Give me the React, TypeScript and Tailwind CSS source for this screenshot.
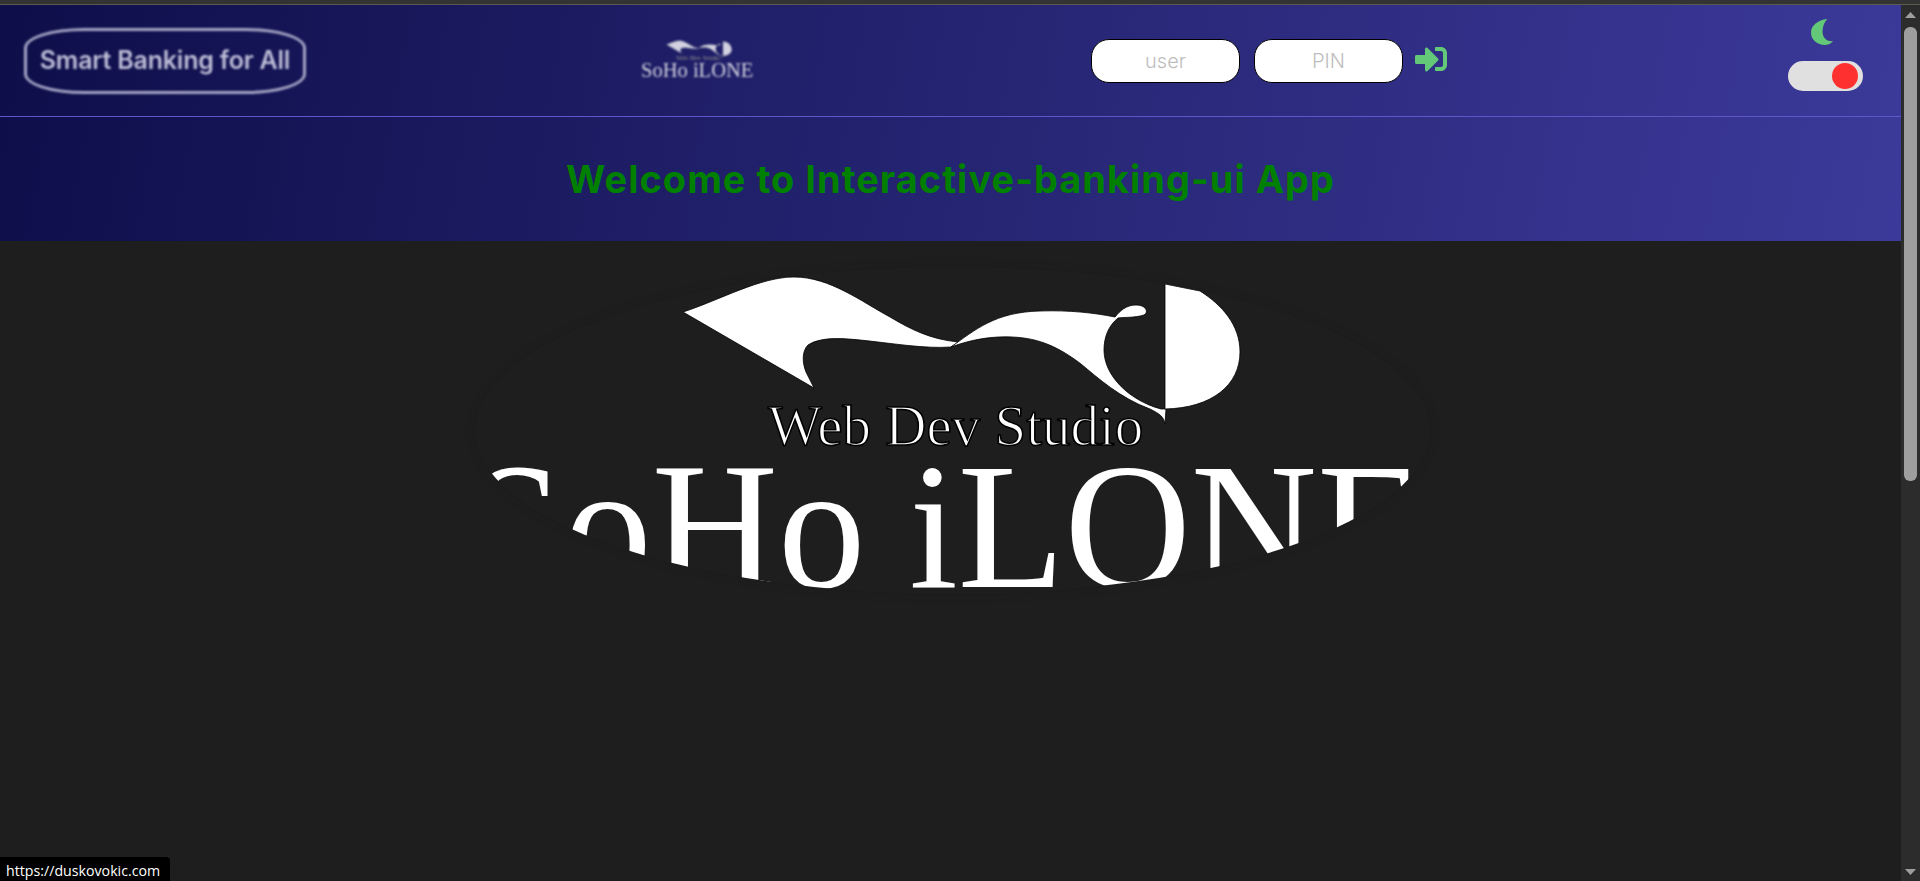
import { FaSignInAlt } from "react-icons/fa";

function Logo({ className }: { className: string }) {
  return (
    <svg viewBox="475 267 955 327" className={className} aria-label="SoHo iLONE Web Dev Studio">
      <g fill="#ffffff" stroke="#000000" strokeWidth="0.8">
        <path d="M683 312 C720 300 760 277 794 277 C830 277 862 302 890 317 C912 330 930 339 958 342 L951 347 C925 349 890 343 860 340 C840 338 820 337 808 345 C802 351 802 362 806 372 L814 388 Z" />
        <path d="M951 347 C975 330 995 312 1040 311 C1070 310 1095 313 1115 317 C1120 311 1126 305 1136 305 C1146 305 1149 312 1144 315 C1134 318 1125 317 1118 318 C1108 326 1104 338 1104 350 C1104 375 1128 400 1161 409 L1166 409 L1165 424 C1164 417 1160 414 1150 409 C1120 398 1098 378 1081 364 C1060 348 1040 338 1012 337 C990 336 970 340 951 347 Z" />
        <path d="M1165 284 L1200 291 C1222 305 1240 325 1240 352 C1240 385 1212 408 1165 409 Z" />
        <text x="768" y="445" fontFamily="'Liberation Serif', serif" fontSize="57" strokeWidth="1.6">Web Dev Studio</text>
      </g>
      <text
        x="467"
        y="587"
        fill="#ffffff"
        fontFamily="'Liberation Serif', serif"
        fontSize="180"
        textLength="957"
        lengthAdjust="spacingAndGlyphs"
      >
        SoHo iLONE
      </text>
    </svg>
  );
}

export default function App() {
  return (
    <div className="relative flex h-[881px] flex-col overflow-hidden bg-[#1e1e1e] font-['Inter',sans-serif]">
      <div className="h-[5px] shrink-0 border-b border-[#5a5a50] bg-[#333333]" />
      <div className="flex min-h-0 flex-1">
        <div className="flex min-w-0 flex-1 flex-col">
          <div className="h-[236px] shrink-0 bg-[linear-gradient(100deg,#0e0e4a,#3c3a9a)]">
            <header className="flex h-[112px] items-center border-b border-[#5f56c9] pl-[24px] pr-[38px]">
              <div className="flex h-[66px] w-[282px] shrink-0 items-center justify-center rounded-[60px/20px] border-[3px] border-[#a5a5c5] text-[25px] font-semibold tracking-[-0.2px] text-[#bebed8] blur-[1.1px]">
                Smart Banking for All
              </div>
              <Logo className="mb-[5px] ml-[336px] h-[39px] w-[112px] shrink-0 opacity-80 blur-[0.8px]" />
              <div className="ml-[337px] flex items-center gap-[14px]">
                <input
                  placeholder="user"
                  className="h-[44px] w-[149px] rounded-[18px] border border-black bg-white text-center text-[20px] font-light placeholder:text-[#bdbdbd]"
                />
                <input
                  placeholder="PIN"
                  className="h-[44px] w-[149px] rounded-[18px] border border-black bg-white text-center text-[20px] font-light placeholder:text-[#bdbdbd]"
                />
              </div>
              <FaSignInAlt className="mb-[3px] ml-[12px] text-[32px] text-[#63c878]" />
              <div className="mb-[12px] ml-auto flex flex-col items-center gap-[15px]">
                <svg viewBox="0 0 24 28" className="mr-[6px] h-[27px] w-[23px]">
                  <path
                    fill="#63c878"
                    d="M17 0 C7 1 0 7 0 14 C0 22 7 27 14 27 C18 27 21 25 23 23 C17 24 12 20 12 13 C12 8 14 3 17 0Z"
                  />
                </svg>
                <div className="flex h-[30px] w-[75px] items-center justify-end rounded-full bg-[#e0e0e0] pr-[5px]">
                  <div className="h-[26px] w-[26px] rounded-full bg-[#ff3030]" />
                </div>
              </div>
            </header>
            <div className="flex h-[123px] items-center justify-center pt-[2px]">
              <h1 className="text-[38px] font-bold tracking-[1px] text-[#008000]">Welcome to Interactive-banking-ui App</h1>
            </div>
          </div>
          <main className="flex flex-1 justify-center pl-[4px] pt-[26px]">
            <div className="h-[327px] w-[955px] overflow-hidden rounded-[50%] shadow-[0_0_12px_rgba(0,0,0,0.1)]">
              <Logo className="h-full w-full" />
            </div>
          </main>
        </div>
        <aside className="flex w-[19px] shrink-0 flex-col items-center bg-[#2c2c2c]">
          <svg viewBox="0 0 19 17" className="h-[17px] w-[19px] shrink-0">
            <path d="M9.5 7 L15 13 L4 13 Z" fill="#9e9e9e" />
          </svg>
          <div className="mt-[5px] h-[454px] w-[13px] rounded-[6px] bg-[#9e9e9e]" />
          <div className="flex-1" />
          <svg viewBox="0 0 19 17" className="h-[17px] w-[19px] shrink-0">
            <path d="M9.5 11 L15 5 L4 5 Z" fill="#9e9e9e" />
          </svg>
        </aside>
      </div>
      <div className="absolute bottom-0 left-0 flex h-[24px] w-[170px] items-center rounded-tr-[4px] bg-black pl-[6px] pt-[3px] font-['Open_Sans',sans-serif] text-[14.2px] text-white">
        https://duskovokic.com
      </div>
    </div>
  );
}
